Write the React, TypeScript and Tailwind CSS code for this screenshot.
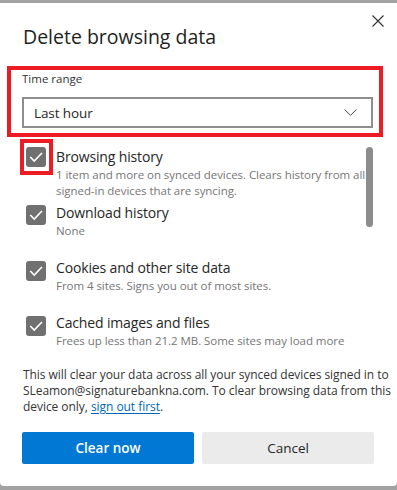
import React from 'react';

const font = { fontFamily: '"Open Sans", "Noto Sans", Arial, sans-serif' };

interface RowProps {
  title: string;
  lines: string[];
  rowTop: string;
  boxTop: string;
  highlight?: boolean;
}

const Check = () => (
  <svg width="20" height="20" viewBox="0 0 20 20" className="block">
    <path d="M4.8 10.6 L8.2 14 L15.4 6.6" fill="none" stroke="#ffffff" strokeWidth="1.6" strokeLinecap="square" />
  </svg>
);

const Row: React.FC<RowProps> = ({ title, lines, rowTop, boxTop, highlight }) => (
  <div className={`flex ${rowTop}`}>
    <div className={`relative ml-[26px] w-[20px] h-[20px] shrink-0 rounded-[3px] bg-[#707070] ${boxTop}`}>
      <Check />
      {highlight && (
        <div className="absolute left-[-6px] top-[-8px] w-[33px] h-[36px] border-4 border-[#ed1c24]" />
      )}
    </div>
    <div className="ml-[10px]">
      <div className="text-[14px] leading-[20px] tracking-[-0.15px] text-[#262626]">{title}</div>
      {lines.map((l) => (
        <div key={l} className="text-[11.5px] leading-[16px] tracking-[-0.05px] text-[#767676] whitespace-nowrap">{l}</div>
      ))}
    </div>
  </div>
);

export default function App() {
  return (
    <div className="w-[397px] h-[490px] bg-[#a2a2a2] flex flex-col overflow-hidden" style={font}>
      <div className="h-[3px] shrink-0" />
      <div className="relative h-[483px] shrink-0 bg-white rounded-b-[4px]">
        {/* close */}
        <button className="absolute top-[12px] right-[13px] w-[12px] h-[12px]">
          <svg width="12" height="12" viewBox="0 0 12 12" className="block">
            <path d="M0.5 0.5 L11.5 11.5 M11.5 0.5 L0.5 11.5" stroke="#333" strokeWidth="1.1" />
          </svg>
        </button>

        <h1 className="pt-[20px] pl-[23px] text-[19.5px] leading-[28px] text-[#1f1f1f]">Delete browsing data</h1>

        {/* time range */}
        <div className="mt-[15px] ml-[7px] w-[376px] h-[71px] border-4 border-[#ed1c24] pl-[11px] pt-[1px]">
          <div className="text-[11.5px] leading-[16px] text-[#333]">Time range</div>
          <div className="mt-[10px] w-[351px] h-[31px] border-2 border-[#8e8e8e] flex items-center justify-between pl-[10px] pr-[14px]">
            <span className="text-[13.5px] leading-[20px] tracking-[-0.1px] text-[#262626]">Last hour</span>
            <svg width="13" height="7" viewBox="0 0 13 7" className="block">
              <path d="M0.5 0.5 L6.5 6.3 L12.5 0.5" fill="none" stroke="#444" strokeWidth="1" />
            </svg>
          </div>
        </div>

        {/* items */}
        <div className="relative pt-[10px]">
          <Row
            rowTop=""
            boxTop="mt-[0px]"
            highlight
            title="Browsing history"
            lines={['1 item and more on synced devices. Clears history from all', 'signed-in devices that are syncing.']}
          />
          <Row rowTop="mt-[4px]" boxTop="mt-[2px]" title="Download history" lines={['None']} />
          <Row rowTop="mt-[19px]" boxTop="mt-[3px]" title="Cookies and other site data" lines={['From 4 sites. Signs you out of most sites.']} />
          <Row rowTop="mt-[19px]" boxTop="mt-[3px]" title="Cached images and files" lines={['Frees up less than 21.2 MB. Some sites may load more']} />
          <div className="absolute right-[24px] top-[10px] w-[7px] h-[80px] rounded-full bg-[#8c8c8c]" />
        </div>

        <p className="mt-[18px] pl-[23px] text-[12px] leading-[16px] tracking-[-0.05px] text-[#333] whitespace-nowrap">
          This will clear your data across all your synced devices signed in to
          <br />
          SLeamon@signaturebankna.com. To clear browsing data from this
          <br />
          device only, <a className="text-[#0067b8] underline underline-offset-2">sign out first</a>.
        </p>

        <div className="mt-[17px] pl-[22px] flex gap-[8px]">
          <button className="w-[172px] h-[32px] rounded-[2px] bg-[#0078d4] text-white text-[13.5px] font-semibold">
            Clear now
          </button>
          <button className="w-[172px] h-[32px] rounded-[2px] bg-[#ebebeb] text-[#262626] text-[13.5px]">
            Cancel
          </button>
        </div>
      </div>
    </div>
  );
}
